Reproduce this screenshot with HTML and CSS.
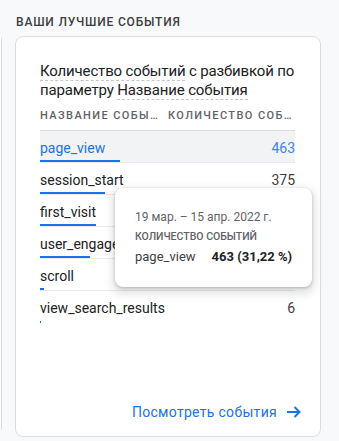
FILE: index.html
```html
<!doctype html>
<html lang="ru">
    <head>
        <meta charset="utf-8">
        <meta name="viewport" content="width=device-width, initial-scale=1">
        <title>Ваши лучшие события</title>
        <link rel="stylesheet" href="styles.css">
    </head>
    <body>
        <div class="page">
            <div class="prev-card"></div>
            <section class="panel">
                <h2 class="panel-title">Ваши лучшие события</h2>
                <div class="card">
                    <h3 class="card-title">
                        <span class="dim">Количество событий</span> с разбивкой по параметру <span class="dim">Название события</span>
                    </h3>
                    <div class="table">
                        <div class="thead">
                            <span class="col-name">Название события</span>
                            <span class="col-value">Количество событий</span>
                        </div>
                        <div class="row is-active">
                            <div class="cells">
                                <span class="name">page_view</span>
                                <span class="value">463</span>
                            </div>
                            <div class="bar" style="width: 80px"></div>
                        </div>
                        <div class="row">
                            <div class="cells">
                                <span class="name">session_start</span>
                                <span class="value">375</span>
                            </div>
                            <div class="bar" style="width: 65px"></div>
                        </div>
                        <div class="row">
                            <div class="cells">
                                <span class="name">first_visit</span>
                                <span class="value">336</span>
                            </div>
                            <div class="bar" style="width: 56px"></div>
                        </div>
                        <div class="row">
                            <div class="cells">
                                <span class="name">user_engagement</span>
                                <span class="value">291</span>
                            </div>
                            <div class="bar" style="width: 50px"></div>
                        </div>
                        <div class="row">
                            <div class="cells">
                                <span class="name">scroll</span>
                                <span class="value">12</span>
                            </div>
                            <div class="bar" style="width: 4px"></div>
                        </div>
                        <div class="row is-last">
                            <div class="cells">
                                <span class="name">view_search_results</span>
                                <span class="value">6</span>
                            </div>
                            <div class="bar" style="width: 1px"></div>
                        </div>
                    </div>
                    <div class="footer">
                        <a class="link" href="#">Посмотреть события
                            <svg class="arrow" viewBox="0 0 16 16" width="16" height="16"><path d="M1 8h12.5M8.5 3l5 5-5 5" fill="none" stroke="currentColor" stroke-width="2"/></svg>
                        </a>
                    </div>
                    <div class="tooltip">
                        <div class="tip-date">19 мар. – 15 апр. 2022 г.</div>
                        <div class="tip-label">Количество событий</div>
                        <div class="tip-row">
                            <span class="tip-name">page_view</span>
                            <span class="tip-value">463 (31,22 %)</span>
                        </div>
                    </div>
                </div>
            </section>
        </div>
    </body>
</html>
```

FILE: styles.css
```css
html {
    font-size: 14px;
    font-family: Roboto, "Noto Sans", sans-serif;
}
body {
    margin: 0;
    background-color: #f8f9fa;
    color: #3c4043;
}
.page {
    display: flex;
    align-items: flex-start;
    height: 441px;
    overflow: hidden;
}
.prev-card {
    width: 1px;
    height: 393px;
    margin-top: 38px;
    background-color: #fff;
    border-right: 1px solid #dadce0;
    border-radius: 0 0 4px 0;
}
.panel {
    margin-left: 13px;
    padding-top: 14px;
}
.panel-title {
    margin: 0 0 6px 1px;
    font-size: 12px;
    line-height: 16px;
    font-weight: 500;
    letter-spacing: 0.8px;
    text-transform: uppercase;
    color: #3c4043;
}
.card {
    position: relative;
    box-sizing: border-box;
    width: 306px;
    height: 401px;
    padding: 25px 18px 14px 24px;
    background-color: #fff;
    border: 1px solid #dadce0;
    border-radius: 8px;
    display: flex;
    flex-direction: column;
}
.card-title {
    margin: 0 -2px 0 0;
    font-size: 15px;
    line-height: 19px;
    font-weight: 400;
    letter-spacing: -0.15px;
    color: #202124;
}
.card-title .dim {
    border-bottom: 1px dashed #c4c7c9;
}
.table {
    margin: 8px 7px 0 0;
}
.thead {
    display: flex;
    justify-content: space-between;
    gap: 8px;
    padding-bottom: 6px;
    border-bottom: 1px solid #dadce0;
    font-size: 11px;
    line-height: 16px;
    font-weight: 500;
    letter-spacing: 1.4px;
    text-transform: uppercase;
    color: #5f6368;
}
.thead span {
    white-space: nowrap;
    overflow: hidden;
    text-overflow: ellipsis;
}
.col-name {
    flex: 0 1 120px;
}
.col-value {
    flex: 1 1 0;
}
.row {
    height: 32px;
    padding-top: 7px;
    box-sizing: border-box;
    border-bottom: 1px solid #e8eaed;
    display: flex;
    flex-direction: column;
}
.row.is-last {
    border-bottom: none;
}
.row.is-active {
    background-color: #f1f3f4;
}
.cells {
    display: flex;
    justify-content: space-between;
    font-size: 14px;
    line-height: 20px;
    color: #202124;
}
.row.is-active .name {
    color: #1a73e8;
}
.row.is-active .value {
    color: #4285f4;
}
.value {
    color: #3c4043;
}
.bar {
    height: 2px;
    margin-top: auto;
    background-color: #1a73e8;
}
.footer {
    margin-top: auto;
    display: flex;
    justify-content: flex-end;
}
.link {
    display: flex;
    align-items: center;
    gap: 9px;
    font-size: 14px;
    line-height: 20px;
    letter-spacing: 0.3px;
    color: #1a73e8;
    text-decoration: none;
}
.arrow {
    display: block;
}
.tooltip {
    position: absolute;
    left: 99px;
    top: 151px;
    width: 197px;
    height: 99px;
    box-sizing: border-box;
    padding: 19px 0 0 20px;
    background-color: #fff;
    border-radius: 8px;
    box-shadow: 0 1px 3px rgba(60, 64, 67, 0.3), 0 4px 8px 3px rgba(60, 64, 67, 0.15);
}
.tip-date {
    font-size: 12px;
    line-height: 20px;
    color: #5f6368;
}
.tip-label {
    font-size: 10.5px;
    line-height: 20px;
    font-weight: 500;
    text-transform: uppercase;
    color: #5f6368;
}
.tip-row {
    display: flex;
    gap: 16px;
    font-size: 13px;
    line-height: 20px;
}
.tip-name {
    color: #3c4043;
}
.tip-value {
    font-weight: 700;
    color: #202124;
}
```
